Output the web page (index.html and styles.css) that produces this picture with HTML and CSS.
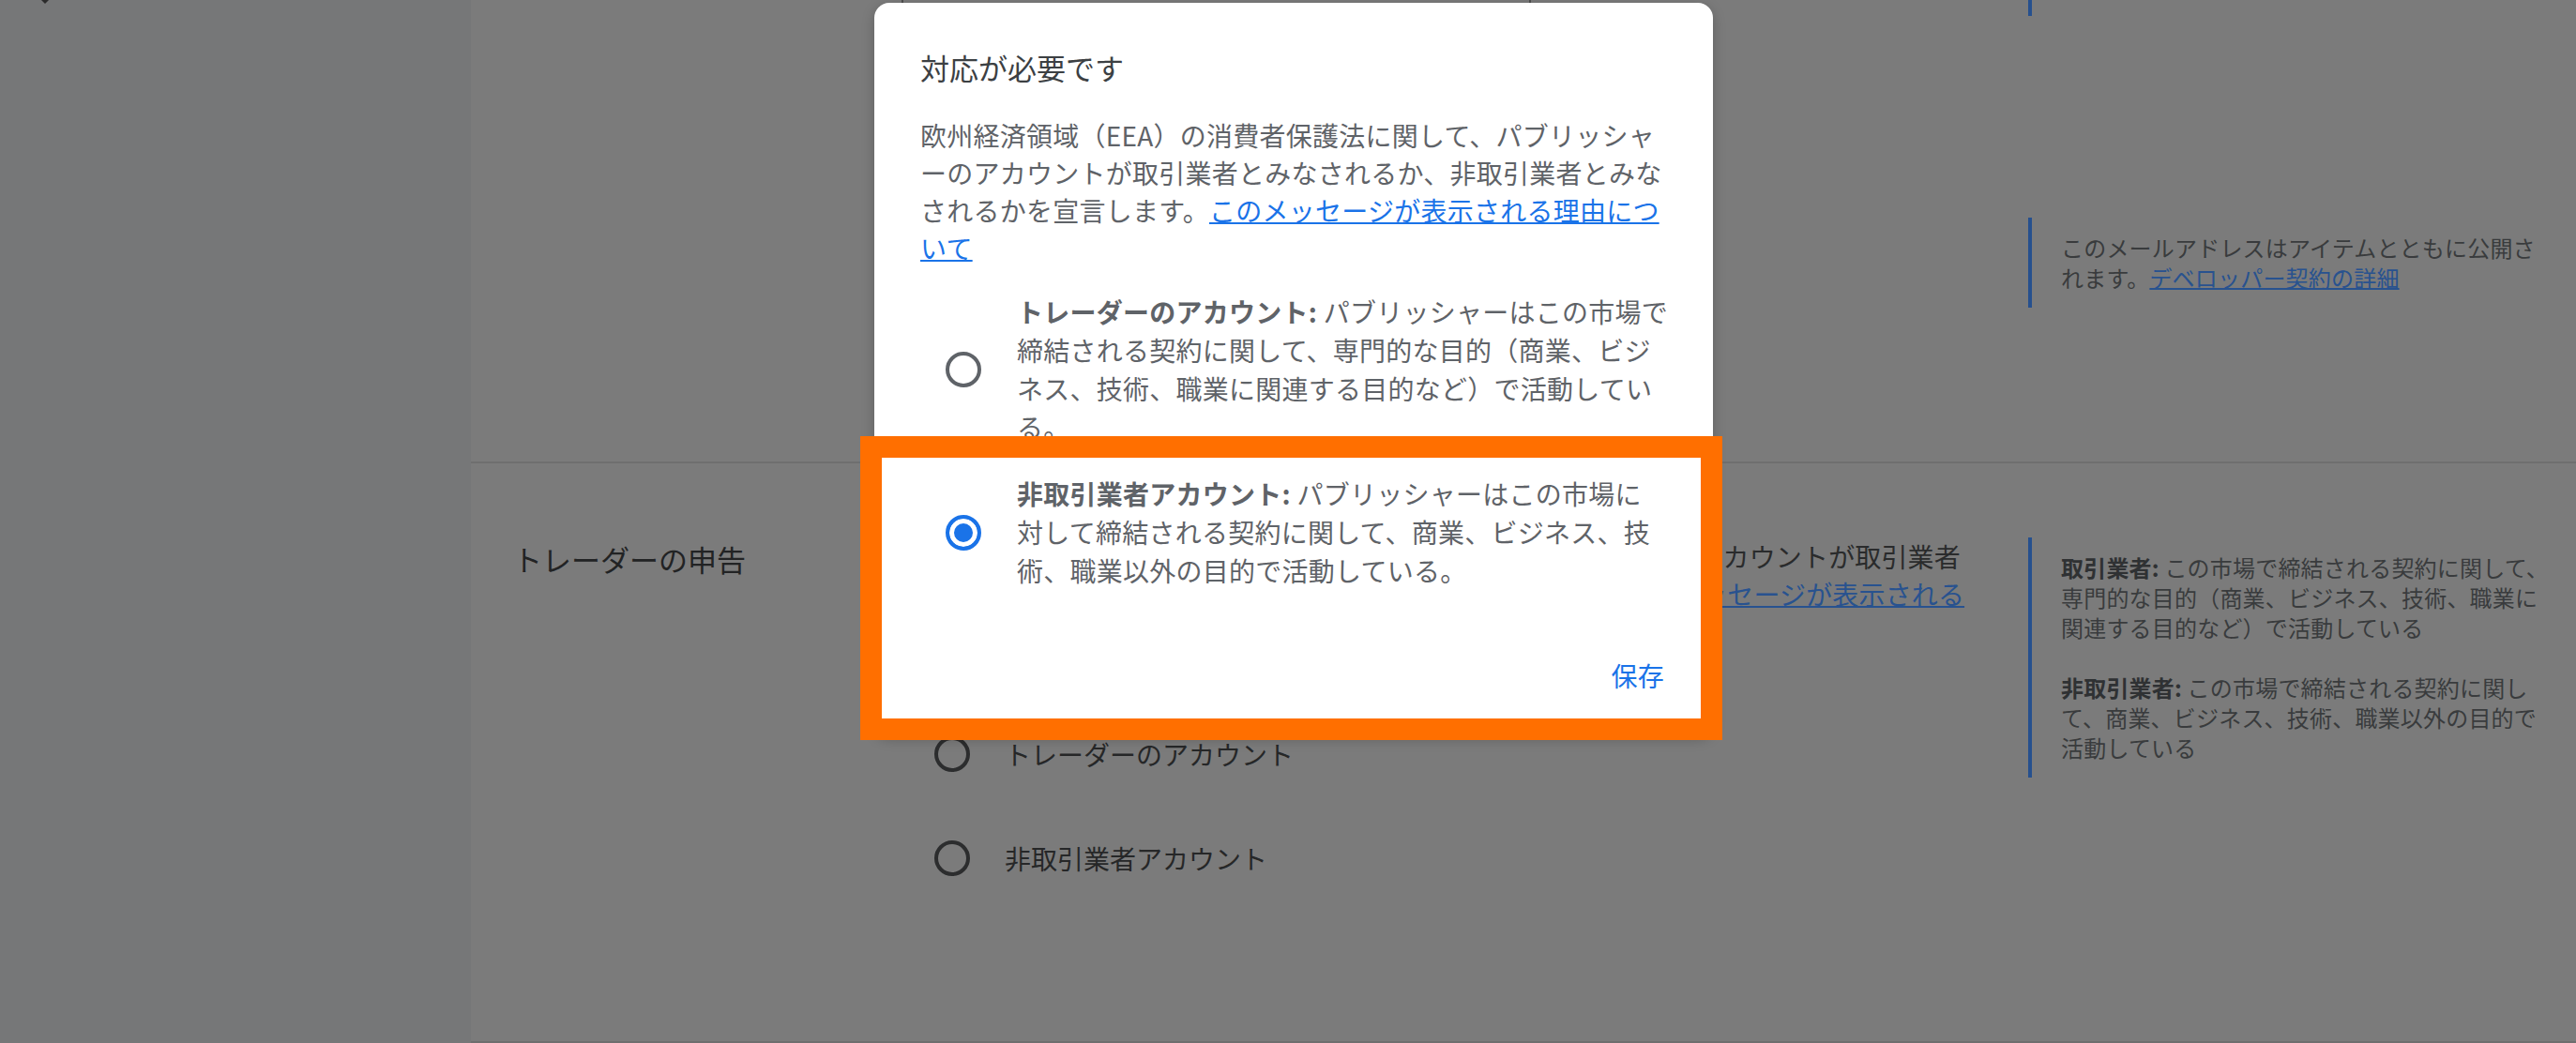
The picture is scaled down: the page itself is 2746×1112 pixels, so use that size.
FILE: index.html
```html
<!DOCTYPE html>
<html lang="ja">
<head>
<meta charset="utf-8">
<title>トレーダーの申告</title>
<link rel="stylesheet" href="styles.css">
</head>
<body>
<div class="app">
  <nav class="sidebar">
    <svg class="caret" width="10" height="6" viewBox="0 0 10 6" aria-hidden="true"><polygon points="0,0 10,0 5,5"/></svg>
  </nav>
  <main class="main">
    <section class="row row-top">
      <div class="label"></div>
      <div class="content">
        <div class="field"></div>
      </div>
      <div class="asides">
        <aside class="note note-cut" aria-hidden="true"></aside>
        <aside class="note note-email">
          <p>このメールアドレスはアイテムとともに公開されます。<a href="#">デベロッパー契約の詳細</a></p>
        </aside>
      </div>
    </section>
    <section class="row row-trader">
      <h2 class="label">トレーダーの申告</h2>
      <div class="content">
        <p class="desc">欧州経済領域（EEA）の消費者保護法に関して、パブリッシャーのアカウントが取引業者とみなされるか、非取引業者とみなされるかを宣言します。<a href="#">このメッセージが表示される理由について</a></p>
        <div class="bg-radios">
          <label class="bg-radio"><span class="ring"></span>トレーダーのアカウント</label>
          <label class="bg-radio"><span class="ring"></span>非取引業者アカウント</label>
        </div>
      </div>
      <div class="asides">
        <aside class="note">
          <p><b>取引業者:</b> この市場で締結される契約に関して、専門的な目的（商業、ビジネス、技術、職業に関連する目的など）で活動している</p>
          <p><b>非取引業者:</b> この市場で締結される契約に関して、商業、ビジネス、技術、職業以外の目的で活動している</p>
        </aside>
      </div>
    </section>
  </main>
</div>

<div class="dialog" role="dialog" aria-labelledby="dlg-title">
  <h1 class="dialog-title" id="dlg-title">対応が必要です</h1>
  <p class="dialog-text">欧州経済領域（EEA）の消費者保護法に関して、パブリッシャーのアカウントが取引業者とみなされるか、非取引業者とみなされるかを宣言します。<a href="#">このメッセージが表示される理由について</a></p>
  <div class="options">
    <label class="option">
      <span class="radio"></span>
      <span class="option-text"><b>トレーダーのアカウント:</b> パブリッシャーはこの市場で締結される契約に関して、専門的な目的（商業、ビジネス、技術、職業に関連する目的など）で活動している。</span>
    </label>
    <label class="option selected">
      <span class="radio"></span>
      <span class="option-text"><b>非取引業者アカウント:</b> パブリッシャーはこの市場に<br>対して締結される契約に関して、商業、ビジネス、技術、職業以外の目的で活動している。</span>
    </label>
  </div>
  <div class="actions"><button class="btn" type="button">保存</button></div>
</div>

<div class="highlight" aria-hidden="true"></div>
</body>
</html>
```
FILE: styles.css
```css
* { box-sizing: border-box; }
html, body { margin: 0; padding: 0; }
body {
  width: 2746px;
  height: 1112px;
  overflow: hidden;
  position: relative;
  background: #7b7b7b;
  font-family: "Noto Sans CJK JP", "Noto Sans", sans-serif;
}

/* ---------- background page (dimmed) ---------- */
.app { display: flex; height: 1112px; }
.sidebar { flex: none; width: 502px; background: #767778; }
.caret { display: block; margin: -1px 0 0 43px; fill: #2b2b2b; }

.main {
  flex: 1;
  min-width: 0;
  display: flex;
  flex-direction: column;
  border-bottom: 2px solid #6e6e6e;
}
.row {
  display: grid;
  grid-template-columns: 425px 1190px 1fr;
  padding-left: 45px;
}
.row-top { flex: none; height: 492px; }
.row-trader { flex: 1; border-top: 2px solid #6f6f6f; padding-top: 79px; }

.label {
  margin: 3px 0 0;
  font-size: 31px;
  line-height: 40px;
  font-weight: 400;
  color: #222324;
}

.field {
  width: 671px;
  height: 120px;
  margin: -57px 0 0 -11px;
  border: 2px solid #4f4f4f;
  border-top: 0;
  border-radius: 0 0 8px 8px;
}

.desc {
  margin: 0;
  width: 1130px;
  font-size: 28px;
  line-height: 40px;
  letter-spacing: 0.15px;
  color: #2a2b2c;
}
.desc a, .note a { color: #28528f; text-decoration-thickness: 2px; }

.bg-radios { margin-top: 55px; display: flex; flex-direction: column; }
.bg-radio {
  height: 111px;
  display: flex;
  align-items: center;
  font-size: 28px;
  color: #262728;
}
.ring {
  flex: none;
  width: 38px;
  height: 38px;
  margin: 0 37px 0 24px;
  border: 4px solid #2c2d2e;
  border-radius: 50%;
}

.asides { display: flex; flex-direction: column; }
.note {
  border-left: 4px solid #26508e;
  padding: 16px 0 16px 31px;
  font-size: 24px;
  line-height: 32px;
  letter-spacing: 0.2px;
  color: #393b3d;
}
.note p { margin: 0; width: 527px; }
.note p + p { margin-top: 32px; }
.note b { color: #2f3133; }
.note-cut { height: 100px; margin-top: -83px; padding: 0; }
.note-email { margin-top: 215px; }

/* ---------- dialog ---------- */
.dialog {
  position: absolute;
  left: 932px;
  top: 3px;
  width: 894px;
  padding: 49px 38px 28px 49px;
  background: #fff;
  border-radius: 16px;
  box-shadow: 0 4px 14px rgba(0, 0, 0, 0.22);
}
.dialog-title {
  margin: 0;
  font-size: 31px;
  line-height: 40px;
  font-weight: 400;
  color: #3c4043;
}
.dialog-text {
  margin: 32px 0 0;
  max-width: 800px;
  font-size: 28px;
  line-height: 40px;
  letter-spacing: 0.25px;
  color: #5f6368;
  line-break: normal;
}
.dialog-text a { color: #1a73e8; text-decoration-thickness: 2px; }

.options { margin-top: 28px; display: flex; flex-direction: column; gap: 30px; }
.option {
  display: grid;
  grid-template-columns: 92px 700px;
  column-gap: 11px;
  align-items: center;
  font-size: 28px;
  line-height: 41px;
  letter-spacing: 0.25px;
  color: #5f6368;
}
.option-text b { font-weight: 700; }
.radio {
  justify-self: center;
  width: 38px;
  height: 38px;
  border: 4px solid #5f6368;
  border-radius: 50%;
}
.option.selected .radio {
  border-color: #1a73e8;
  background: #1a73e8;
  box-shadow: inset 0 0 0 5px #fff;
}

.actions { display: flex; justify-content: flex-end; margin-top: 55px; }
.btn {
  height: 72px;
  padding: 0 14px;
  border: 0;
  background: transparent;
  font-family: inherit;
  font-size: 28px;
  letter-spacing: 0.25px;
  color: #1a73e8;
}

/* ---------- annotation ---------- */
.highlight {
  position: absolute;
  left: 917px;
  top: 465px;
  width: 919px;
  height: 324px;
  border: 23px solid #ff6f00;
  pointer-events: none;
}
```
